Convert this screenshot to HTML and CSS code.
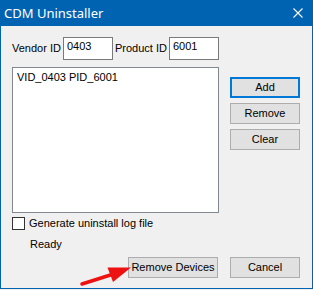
FILE: index.html
```html
<!DOCTYPE html>
<html>
<head>
<meta charset="utf-8">
<link rel="stylesheet" href="styles.css">
</head>
<body>
<div class="window">
  <div class="titlebar">
    <span class="title">CDM Uninstaller</span>
    <svg class="close" width="10" height="10" viewBox="0 0 10 10"><path d="M0.5 0.5 L9.5 9.5 M9.5 0.5 L0.5 9.5" stroke="#ffffff" stroke-width="1.1" fill="none"/></svg>
  </div>
  <div class="content">
    <div class="ids">
      <span class="lbl lbl-vendor">Vendor ID</span>
      <div class="edit">0403</div>
      <span class="lbl lbl-product">Product ID</span>
      <div class="edit">6001</div>
    </div>
    <div class="middle">
      <div class="list"><div class="item">VID_0403 PID_6001</div></div>
      <div class="side">
        <div class="btn btn-default">Add</div>
        <div class="btn">Remove</div>
        <div class="btn">Clear</div>
      </div>
    </div>
    <div class="check-row">
      <span class="checkbox"></span>
      <span class="check-label">Generate uninstall log file</span>
    </div>
    <div class="status">Ready</div>
    <div class="bottom">
      <div class="btn btn-wide">Remove Devices</div>
      <div class="btn">Cancel</div>
    </div>
  </div>
  <svg class="arrow" width="313" height="290" viewBox="0 0 313 290">
    <line x1="82" y1="284" x2="112" y2="274.5" stroke="#ee1111" stroke-width="3.5" stroke-linecap="round"/>
    <polygon points="131,267.5 107.5,267.5 113,282" fill="#ee1111"/>
  </svg>
</div>
</body>
</html>
```
FILE: styles.css
```css
html, body {
  margin: 0;
  padding: 0;
  background: #f0f0f0;
}
.window {
  position: relative;
  width: 313px;
  height: 289px;
  box-sizing: border-box;
  border: 1px solid #0063b1;
  border-top: 0;
  background: #f0f0f0;
  font-family: "Liberation Sans", Arial, sans-serif;
  font-size: 11px;
  color: #000;
}
.titlebar {
  height: 26px;
  background: #0063b1;
  display: flex;
  align-items: center;
  justify-content: space-between;
  padding: 0 9px 0 3px;
}
.title {
  font-family: "Noto Sans", "Open Sans", sans-serif;
  font-size: 13px;
  color: #ffffff;
  line-height: 17px;
}
.close {
  display: block;
}
.content {
  padding-left: 11px;
  padding-right: 12px;
}
.ids {
  display: flex;
  margin-top: 11px;
  height: 23px;
}
.lbl {
  line-height: 23px;
  white-space: nowrap;
}
.lbl-vendor {
  width: 51px;
}
.lbl-product {
  width: 54px;
  padding-left: 2px;
}
.edit {
  width: 50px;
  height: 23px;
  box-sizing: border-box;
  border: 1px solid #7a7a7a;
  background: #ffffff;
  padding: 2px 0 0 3px;
  line-height: 13px;
}
.middle {
  display: flex;
  margin-top: 7px;
}
.list {
  width: 207px;
  height: 146px;
  box-sizing: border-box;
  border: 1px solid #828790;
  background: #ffffff;
  padding: 3px 0 0 4px;
}
.item {
  line-height: 13px;
}
.side {
  margin-left: 11px;
  padding-top: 10px;
  display: flex;
  flex-direction: column;
  gap: 5px;
}
.btn {
  width: 70px;
  height: 21px;
  box-sizing: border-box;
  border: 1px solid #adadad;
  background: #e1e1e1;
  display: flex;
  align-items: center;
  justify-content: center;
  line-height: 13px;
}
.btn-default {
  border: 2px solid #0078d7;
}
.btn-wide {
  width: 90px;
}
.check-row {
  display: flex;
  align-items: center;
  margin-top: 4px;
  height: 13px;
}
.checkbox {
  width: 13px;
  height: 13px;
  box-sizing: border-box;
  border: 1px solid #333333;
  background: #ffffff;
  margin-right: 4px;
}
.check-label {
  line-height: 13px;
}
.status {
  margin-top: 8px;
  margin-left: 18px;
  line-height: 13px;
}
.bottom {
  display: flex;
  justify-content: flex-end;
  gap: 12px;
  margin-top: 6px;
}
.arrow {
  position: absolute;
  left: -1px;
  top: 0;
  pointer-events: none;
}
```
